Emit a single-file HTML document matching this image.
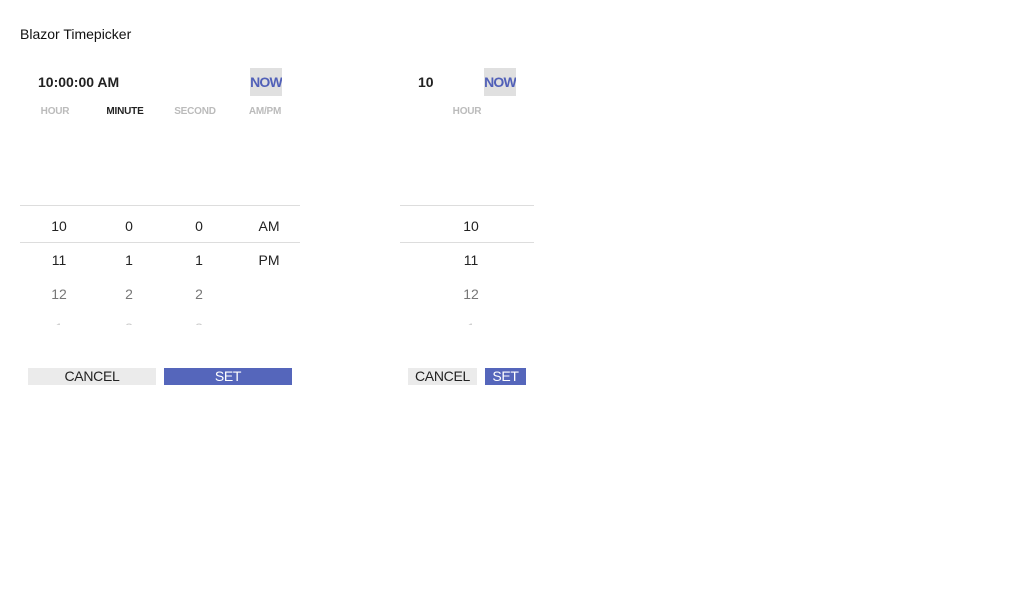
<!DOCTYPE html>
<html><head><meta charset="utf-8"><style>
body{margin:0;width:1024px;height:600px;background:#fff;font-family:"Liberation Sans",sans-serif;position:relative;overflow:hidden;color:#222}
.a{position:absolute;white-space:nowrap}
.c{position:absolute;text-align:center;transform:translateX(-50%);white-space:nowrap}
.lab{font-size:10px;font-weight:bold;color:#bbb;letter-spacing:-0.2px}
.num{font-size:14px;color:#222}
.g{color:#777}
.line{position:absolute;height:1px;background:#ddd}
.now{position:absolute;background:#e0e0e0;color:#5160b8;font-weight:bold;font-size:14px;text-align:center;line-height:28px;letter-spacing:-0.8px;overflow:hidden}
.btn{position:absolute;font-size:14px;text-align:center;line-height:17px;height:17px;letter-spacing:-0.3px}
.clip{position:absolute;overflow:hidden}
</style></head><body>
<div class="a" style="left:20px;top:26px;font-size:14px;color:#111">Blazor Timepicker</div>

<div class="a" style="left:38px;top:74px;font-size:14px;font-weight:bold">10:00:00 AM</div>
<div class="now" style="left:250px;top:68px;width:32px;height:28px">NOW</div>
<div class="c lab" style="left:55px;top:106px">HOUR</div>
<div class="c lab" style="left:125px;top:106px;color:#222">MINUTE</div>
<div class="c lab" style="left:195px;top:106px">SECOND</div>
<div class="c lab" style="left:265px;top:106px">AM/PM</div>

<div class="line" style="left:20px;top:205px;width:280px"></div>
<div class="line" style="left:20px;top:242px;width:280px"></div>
<div class="clip" style="left:20px;top:210px;width:280px;height:115px">
 <div class="c num" style="left:39px;top:8px">10</div>
 <div class="c num" style="left:109px;top:8px">0</div>
 <div class="c num" style="left:179px;top:8px">0</div>
 <div class="c num" style="left:249px;top:8px">AM</div>
 <div class="c num" style="left:39px;top:42px">11</div>
 <div class="c num" style="left:109px;top:42px">1</div>
 <div class="c num" style="left:179px;top:42px">1</div>
 <div class="c num" style="left:249px;top:42px">PM</div>
 <div class="c num g" style="left:39px;top:76px">12</div>
 <div class="c num g" style="left:109px;top:76px">2</div>
 <div class="c num g" style="left:179px;top:76px">2</div>
 <div class="c num" style="left:39px;top:110px;color:#ccc">1</div>
 <div class="c num" style="left:109px;top:110px;color:#ccc">3</div>
 <div class="c num" style="left:179px;top:110px;color:#ccc">3</div>
</div>
<div class="btn" style="left:28px;top:368px;width:128px;background:#ebebeb;color:#222">CANCEL</div>
<div class="btn" style="left:164px;top:368px;width:128px;background:#5566bb;color:#fff">SET</div>

<div class="a" style="left:418px;top:74px;font-size:14px;font-weight:bold">10</div>
<div class="now" style="left:484px;top:68px;width:32px;height:28px">NOW</div>
<div class="c lab" style="left:467px;top:106px">HOUR</div>
<div class="line" style="left:400px;top:205px;width:134px"></div>
<div class="line" style="left:400px;top:242px;width:134px"></div>
<div class="clip" style="left:400px;top:210px;width:134px;height:115px">
 <div class="c num" style="left:71px;top:8px">10</div>
 <div class="c num" style="left:71px;top:42px">11</div>
 <div class="c num g" style="left:71px;top:76px">12</div>
 <div class="c num" style="left:71px;top:110px;color:#ccc">1</div>
</div>
<div class="btn" style="left:408px;top:368px;width:69px;background:#ebebeb;color:#222">CANCEL</div>
<div class="btn" style="left:485px;top:368px;width:41px;background:#5566bb;color:#fff">SET</div>
</body></html>
